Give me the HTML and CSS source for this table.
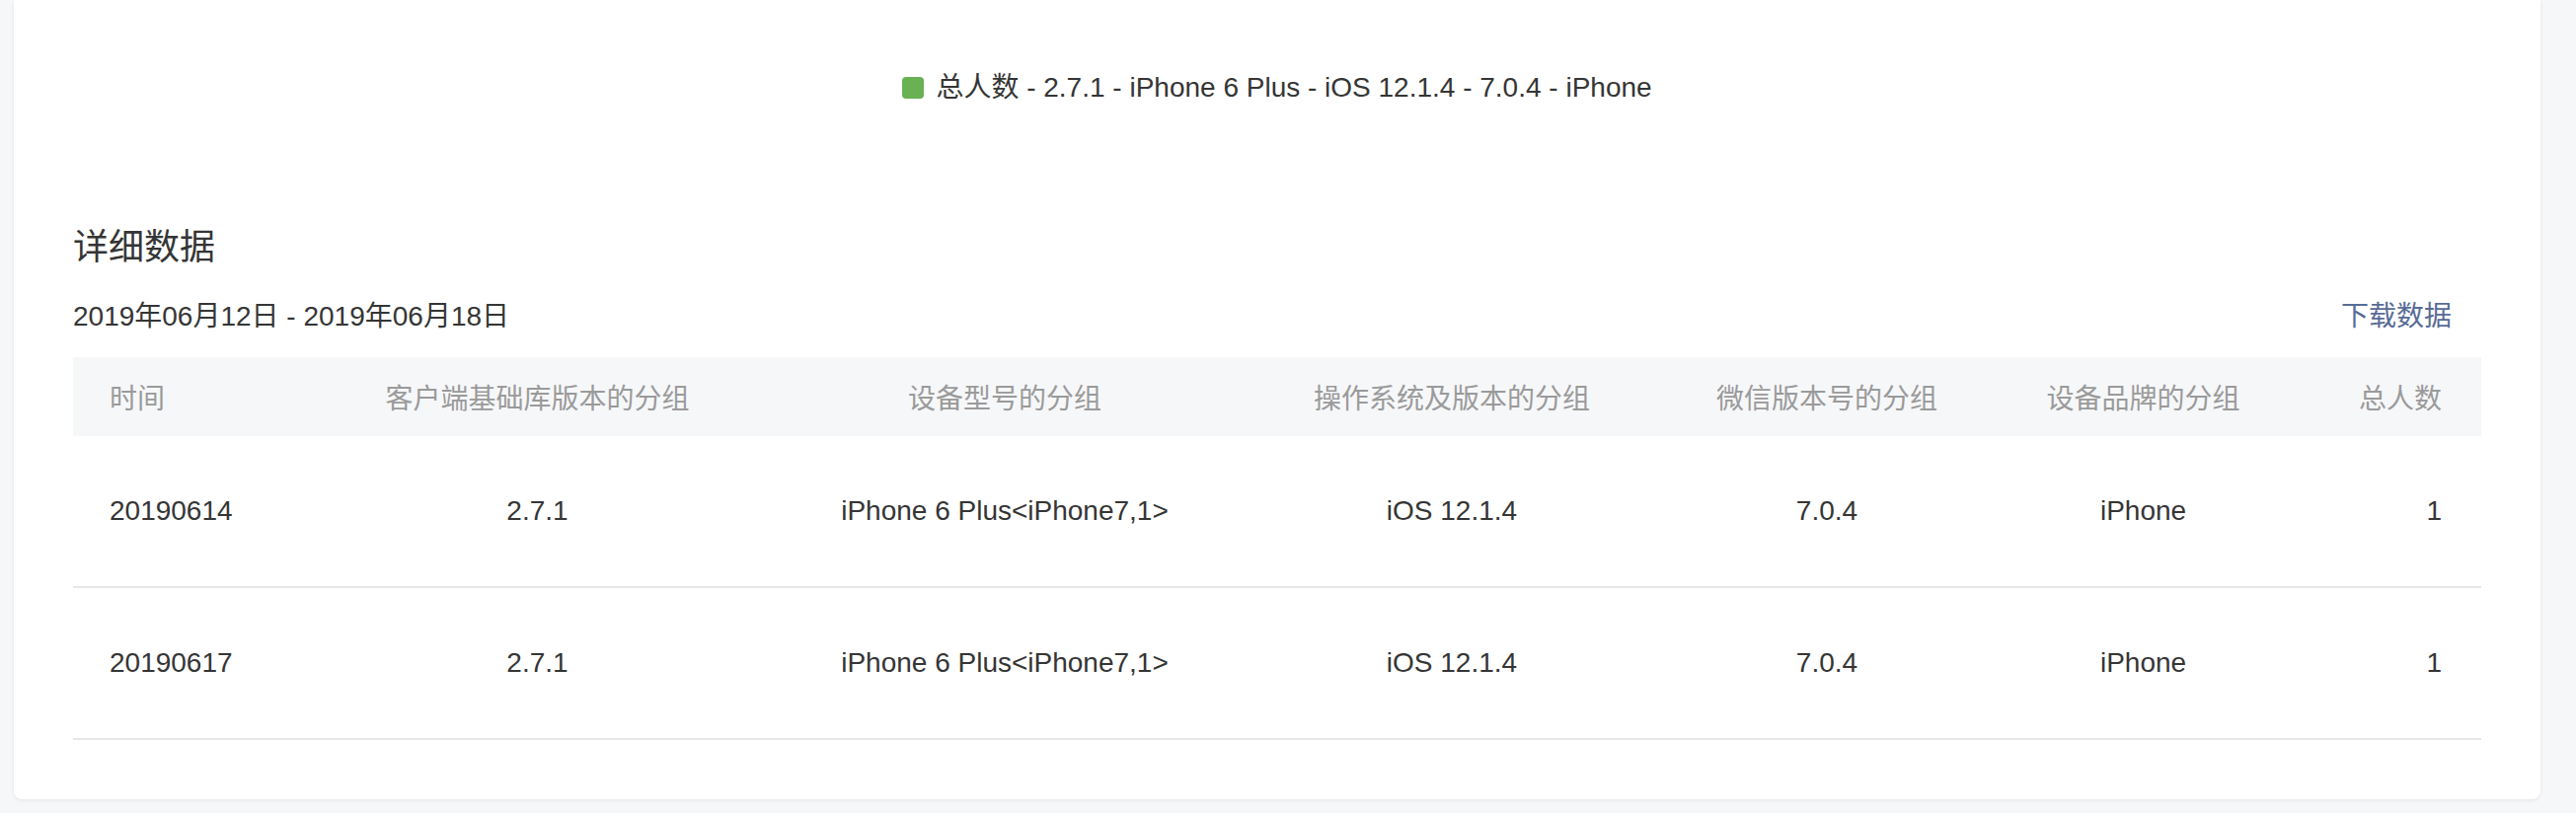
FILE: index.html
```html
<!DOCTYPE html>
<html lang="zh-CN">
<head>
    <meta charset="UTF-8">
    <meta name="viewport" content="width=device-width, initial-scale=1.0">
    <title>详细数据</title>
    <link rel="stylesheet" href="styles.css">
</head>
<body>
    <div class="card">
        <div class="legend">
            <span class="legend-mark"></span>
            <span class="legend-text">总人数 - 2.7.1 - iPhone 6 Plus - iOS 12.1.4 - 7.0.4 - iPhone</span>
        </div>

        <h2 class="section-title">详细数据</h2>

        <div class="range-bar">
            <span class="range">2019年06月12日 - 2019年06月18日</span>
            <a class="download" href="#">下载数据</a>
        </div>

        <table class="data-table">
            <colgroup>
                <col style="width: 232px">
                <col style="width: 477px">
                <col style="width: 470px">
                <col style="width: 436px">
                <col style="width: 324px">
                <col style="width: 317px">
                <col style="width: 184px">
            </colgroup>
            <thead>
                <tr>
                    <th class="first">时间</th>
                    <th>客户端基础库版本的分组</th>
                    <th>设备型号的分组</th>
                    <th>操作系统及版本的分组</th>
                    <th>微信版本号的分组</th>
                    <th>设备品牌的分组</th>
                    <th class="last">总人数</th>
                </tr>
            </thead>
            <tbody>
                <tr>
                    <td class="first">20190614</td>
                    <td>2.7.1</td>
                    <td>iPhone 6 Plus&lt;iPhone7,1&gt;</td>
                    <td>iOS 12.1.4</td>
                    <td>7.0.4</td>
                    <td>iPhone</td>
                    <td class="last">1</td>
                </tr>
                <tr>
                    <td class="first">20190617</td>
                    <td>2.7.1</td>
                    <td>iPhone 6 Plus&lt;iPhone7,1&gt;</td>
                    <td>iOS 12.1.4</td>
                    <td>7.0.4</td>
                    <td>iPhone</td>
                    <td class="last">1</td>
                </tr>
            </tbody>
        </table>
    </div>
</body>
</html>
```

FILE: styles.css
```css
body {
    margin: 0;
    padding: 0 36px 15px 14px;
    background-color: #f6f7f9;
    font-family: "Liberation Sans", "Noto Sans CJK SC", sans-serif;
    color: #353535;
}

.card {
    background: #fff;
    padding: 72px 60px 60px;
    border-radius: 0 0 8px 8px;
    box-shadow: 0 1px 4px rgba(0, 0, 0, 0.08);
}

.legend {
    display: flex;
    align-items: center;
    justify-content: center;
    gap: 12px;
    height: 34px;
    font-size: 28px;
    line-height: 34px;
}

.legend-mark {
    width: 22px;
    height: 22px;
    border-radius: 4px;
    background-color: #69b153;
}

.section-title {
    margin: 120px 0 0;
    font-size: 36px;
    font-weight: normal;
    line-height: 50px;
    color: #353535;
}

.range-bar {
    display: flex;
    justify-content: space-between;
    align-items: center;
    margin-top: 25px;
    height: 40px;
    font-size: 28px;
    line-height: 40px;
}

.download {
    margin-right: 30px;
    color: #576b95;
    text-decoration: none;
}

.data-table {
    width: 100%;
    margin-top: 21px;
    table-layout: fixed;
    border-collapse: collapse;
    font-size: 28px;
}

.data-table th,
.data-table td {
    padding: 0 40px;
    text-align: center;
    white-space: nowrap;
}

.data-table th {
    height: 80px;
    background-color: #f6f7f9;
    font-weight: normal;
    color: #9a9a9a;
}

.data-table td {
    height: 152px;
    border-bottom: 2px solid #e7e7e7;
    color: #353535;
}

.data-table .first {
    padding-left: 37px;
    text-align: left;
}

.data-table .last {
    text-align: right;
}
```
